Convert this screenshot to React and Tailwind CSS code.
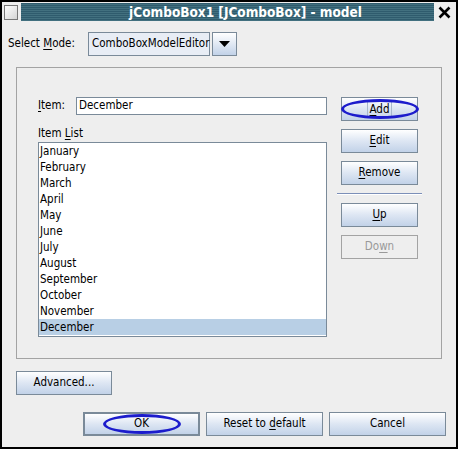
const months = [
  "January",
  "February",
  "March",
  "April",
  "May",
  "June",
  "July",
  "August",
  "September",
  "October",
  "November",
  "December",
];

const btn =
  "flex items-center justify-center border border-[#7a8a99] bg-[linear-gradient(#ffffff,#dde6f3_50%,#c2d2e8)] text-black";

function Btn({ children, className = "", ring = false }) {
  return (
    <div className={`relative ${btn} ${className}`}>
      {children}
      {ring && (
        <div className="absolute left-1/2 top-1/2 h-[20px] w-[78px] -translate-x-1/2 -translate-y-1/2 rounded-[50%] border-[3px] border-[#1c1ccc]" />
      )}
    </div>
  );
}

const U = ({ children }) => <span className="underline underline-offset-2">{children}</span>;

const App = () => {
  return (
    <div className="h-[449px] w-[458px] overflow-hidden border-2 border-black bg-[#eeeeee] font-['DejaVu_Sans_Condensed','DejaVu_Sans',sans-serif] text-[11.5px] text-black">
      {/* title bar */}
      <div className="flex h-[20px] items-center pl-[2px] pr-[2px]">
        <div className="h-[15px] w-[14px] border border-[#777] bg-[linear-gradient(135deg,#ffffff,#d4d4d4)]" />
        <div className="ml-[3px] flex h-[18px] w-[416px] items-center justify-center bg-[repeating-linear-gradient(#2f5b6d_0px,#2f5b6d_1px,#42707f_1px,#42707f_2px)] pl-[36px] text-[13.5px] font-bold text-white">
          jComboBox1 [JComboBox] - model
        </div>
        <div className="flex w-[20px] justify-center">
          <svg width="13" height="13" viewBox="0 0 13 13">
            <path d="M1.5 1.5 L11.5 11.5 M11.5 1.5 L1.5 11.5" stroke="#000" strokeWidth="2.6" />
          </svg>
        </div>
      </div>

      {/* select mode */}
      <div className="mt-[10px] flex h-[24px] items-center pl-[6px]">
        <span className="w-[80px]">
          Select <U>M</U>ode:
        </span>
        <div className="flex h-[24px] w-[122px] items-center border border-[#7a8a99] bg-[#e8edf5] pl-[3px]">
          ComboBoxModelEditor
        </div>
        <div className="ml-[2px] flex h-[24px] w-[25px] items-center justify-center border border-[#7a8a99] bg-[linear-gradient(#ffffff,#c2d2e8)]">
          <svg width="11" height="6" viewBox="0 0 11 6">
            <path d="M0 0 L11 0 L5.5 6 Z" fill="#000" />
          </svg>
        </div>
      </div>

      {/* panel */}
      <div className="ml-[14px] mt-[11px] flex h-[292px] w-[426px] gap-[14px] border border-[#a3a3a3] pl-[21px] pt-[29px]">
        <div className="flex w-[289px] flex-col">
          <div className="flex h-[18px] items-center">
            <span className="w-[38px]">
              <U>I</U>tem:
            </span>
            <div className="flex h-[18px] flex-1 items-center border border-[#7a8a99] bg-white pl-[2px]">
              December
            </div>
          </div>
          <div className="mt-[10px] h-[17px] leading-[17px]">
            Item <U>L</U>ist
          </div>
          <div className="h-[195px] border border-[#7a8a99] bg-white">
            {months.map((m) => (
              <div
                key={m}
                className={`h-[16px] pl-[1px] leading-[16px] ${m === "December" ? "bg-[#b8cfe5]" : ""}`}
              >
                {m}
              </div>
            ))}
          </div>
        </div>
        <div className="flex w-[77px] flex-col">
          <Btn className="h-[24px]" ring>
            <span className="border border-[#a8b8cc] px-[1px] leading-[14px]">
              <U>A</U>dd
            </span>
          </Btn>
          <Btn className="mt-[8px] h-[24px]">
            <span>
              <U>E</U>dit
            </span>
          </Btn>
          <Btn className="mt-[8px] h-[24px]">
            <span>
              <U>R</U>emove
            </span>
          </Btn>
          <div className="-mx-[4px] mt-[8px] h-[2px] border-t border-[#7c8fb8] bg-white" />
          <Btn className="mt-[8px] h-[24px]">
            <span>
              <U>U</U>p
            </span>
          </Btn>
          <div className="mt-[8px] flex h-[24px] items-center justify-center border border-[#a3a3a3] text-[#999]">
            <span>
              Do<U>w</U>n
            </span>
          </div>
        </div>
      </div>

      {/* advanced */}
      <div className="ml-[14px] mt-[12px] flex">
        <Btn className="h-[24px] w-[96px]">Advanced...</Btn>
      </div>

      {/* bottom buttons */}
      <div className="ml-[81px] mt-[17px] flex gap-[6px]">
        <Btn className="h-[24px] w-[117px] border-2 border-[#7a8a99]" ring>
          OK
        </Btn>
        <Btn className="h-[24px] w-[117px]">
          <span>
            Reset to <U>d</U>efault
          </span>
        </Btn>
        <Btn className="h-[24px] w-[117px]">Cancel</Btn>
      </div>
    </div>
  );
};

export default App;
